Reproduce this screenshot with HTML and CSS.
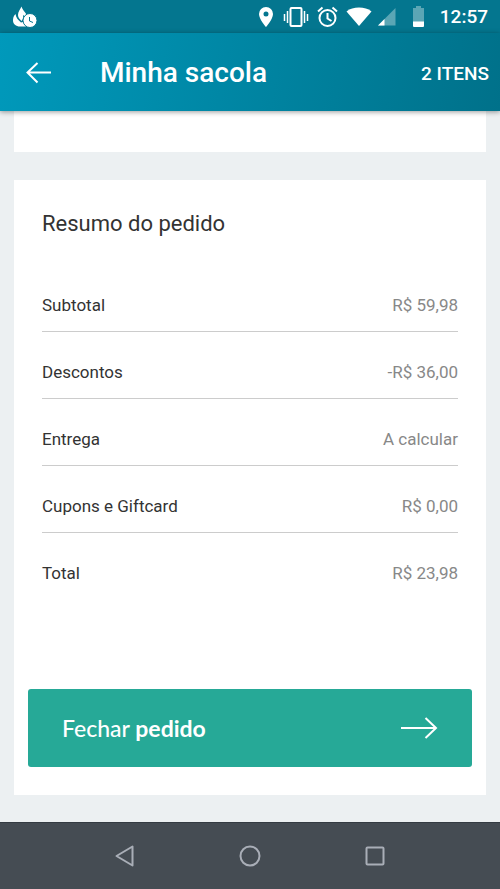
FILE: index.html
```html
<!DOCTYPE html>
<html lang="pt-BR">
<head>
<meta charset="utf-8">
<meta name="viewport" content="width=device-width, initial-scale=1">
<title>Minha sacola</title>
<link rel="stylesheet" href="styles.css">
</head>
<body>
<div class="status">
  <svg class="status-app" viewBox="0 0 30 33" aria-hidden="true">
    <path d="M9.500 6.500C8 9.500 6 12 6 15c0 2.500 1.500 4 3.500 6 1.500-1.500 2-3 1.500-6l3.500 2.500c1.500-4-4-6.500-5-11z" fill="#fff"/>
    <path d="M3.500 14C1.500 16 1 18 1 20.500 1 24 4 26.500 8 26.500h6V21l-5 1.500C6 20 4 17.500 3.500 14z" fill="#fff"/>
    <circle cx="18" cy="20.500" r="7" fill="#fff" stroke="#04768f" stroke-width="1"/>
    <path d="M17.500 17v4l3.500 1.500" fill="none" stroke="#04768f" stroke-width="1"/>
  </svg>
  <div class="status-icons">
    <svg viewBox="0 0 30 33" aria-hidden="true"><path fill="#fff" fill-rule="evenodd" d="M14 7a7 7 0 0 0-7 7c0 5.200 7 13 7 13s7-7.800 7-13a7 7 0 0 0-7-7zm0 4.500a2.500 2.500 0 1 1 0 5 2.500 2.500 0 0 1 0-5z"/></svg>
    <svg viewBox="0 0 30 33" aria-hidden="true"><path fill="none" stroke="#fff" stroke-width="2" d="M9.500 8h9a1 1 0 0 1 1 1v16a1 1 0 0 1-1 1h-9a1 1 0 0 1-1-1V9a1 1 0 0 1 1-1z"/><path fill="none" stroke="#fff" stroke-width="1.500" d="M2.500 14v7M5.500 11v12M22.500 11v12M25.500 14v7"/></svg>
    <svg viewBox="0 0 30 33" aria-hidden="true"><g fill="none" stroke="#fff" stroke-width="2"><circle cx="15.500" cy="18" r="8"/><path d="M15.500 13v5.500l4 2.500M6 11.500l4.500-4M25 11.500l-4.500-4"/></g></svg>
    <svg viewBox="0 0 30 33" aria-hidden="true"><path fill="#fff" d="M17 26L4.500 11.500C8 8.500 12 7.500 17 7.500s9 1 12.500 4z"/></svg>
    <svg viewBox="0 0 30 33" aria-hidden="true"><path fill="#5ba6b5" d="M23.500 8v17.500H6z"/><path fill="#fff" d="M12.500 19v6.500H6z"/></svg>
    <svg viewBox="0 0 30 33" aria-hidden="true"><path fill="#5ba6b5" d="M14 6h5v2h3v14H11V8h3z"/><path fill="#fff" d="M11 21.500h11V26a1 1 0 0 1-1 1h-9a1 1 0 0 1-1-1z"/></svg>
  </div>
  <time class="clock">12:57</time>
</div>
<header class="topbar">
  <button class="back" type="button" aria-label="Voltar">
    <svg viewBox="0 0 26 22" aria-hidden="true"><path d="M25 10.500H1.500M11.500 1L1.500 10.500l10 10"/></svg>
  </button>
  <h1>Minha sacola</h1>
  <span class="count">2 ITENS</span>
</header>
<main class="content">
  <section class="card card-previous" aria-hidden="true"></section>
  <section class="card summary">
    <h2>Resumo do pedido</h2>
    <dl>
      <div class="row"><dt>Subtotal</dt><dd>R$ 59,98</dd></div>
      <div class="row"><dt>Descontos</dt><dd>-R$ 36,00</dd></div>
      <div class="row"><dt>Entrega</dt><dd>A calcular</dd></div>
      <div class="row"><dt>Cupons e Giftcard</dt><dd>R$ 0,00</dd></div>
      <div class="row"><dt>Total</dt><dd>R$ 23,98</dd></div>
    </dl>
    <button class="checkout" type="button">
      <span>Fechar <b>pedido</b></span>
      <svg viewBox="0 0 38 22" aria-hidden="true"><path d="M1 11h34.500M25.500 1l10.500 10-10.500 10"/></svg>
    </button>
  </section>
</main>
<nav class="navbar" aria-label="Sistema">
  <button type="button" aria-label="Voltar"><svg viewBox="0 0 24 24" aria-hidden="true"><path d="M19.500 2.500v19L3.500 12z"/></svg></button>
  <button type="button" aria-label="Início"><svg viewBox="0 0 24 24" aria-hidden="true"><circle cx="12" cy="12" r="9.500"/></svg></button>
  <button type="button" aria-label="Recentes"><svg viewBox="0 0 24 24" aria-hidden="true"><rect x="3.500" y="3.500" width="17" height="17" rx="1"/></svg></button>
</nav>
</body>
</html>
```
FILE: styles.css
```css
* {
  box-sizing: border-box;
}

body {
  display: flex;
  flex-direction: column;
  min-height: 100vh;
  margin: 0;
  background: #ecf0f2;
  color: #333;
  font-family: Roboto, sans-serif;
}

button {
  border: 0;
  padding: 0;
  background: none;
  color: inherit;
  font: inherit;
  cursor: pointer;
}

svg {
  display: block;
}

.status {
  display: flex;
  align-items: center;
  padding: 0 12px;
  background: #04768f;
  color: #fff;
}

.status svg {
  width: 30px;
  height: 33px;
}

.status-icons {
  display: flex;
  margin-left: auto;
}

.clock {
  margin-left: 8px;
  font-size: 19px;
  font-weight: 500;
  line-height: 32px;
}

.topbar {
  position: relative;
  display: flex;
  align-items: center;
  padding: 20px 11px 18px 26px;
  background: linear-gradient(100deg, #0099bb, #00718a);
  box-shadow: 0 1px 5px rgba(0, 0, 0, 0.4);
  color: #fff;
}

.back svg {
  width: 26px;
  height: 22px;
  fill: none;
  stroke: #fff;
  stroke-width: 2;
}

h1 {
  flex: 1;
  margin: 0 0 0 48px;
  font-size: 28px;
  font-weight: 500;
  line-height: 40px;
}

.count {
  font-size: 19px;
  font-weight: 500;
}

.content {
  flex: 1;
  display: flex;
  flex-direction: column;
  gap: 28px;
  padding: 0 14px 27px;
}

.card {
  background: #fff;
}

.card-previous {
  padding-top: 41px;
}

.summary {
  padding: 28px 14px;
}

h2 {
  margin: 0 14px;
  font-size: 22px;
  font-weight: 400;
  line-height: 32px;
}

dl {
  margin: 25px 14px 90px;
}

.row {
  display: flex;
  justify-content: space-between;
  padding: 30px 0 15px;
  border-bottom: 1px solid #ccc;
  font-size: 17px;
  line-height: 21px;
}

.row:last-child {
  border-bottom: 0;
}

dd {
  margin: 0;
  color: #888;
}

.checkout {
  display: flex;
  align-items: center;
  justify-content: space-between;
  width: 100%;
  padding: 24px 34px;
  border-radius: 3px;
  background: #26a997;
  color: #fff;
  font-family: Lato, sans-serif;
  font-size: 23px;
  font-weight: 500;
  line-height: 30px;
}

.checkout svg {
  width: 38px;
  height: 22px;
  fill: none;
  stroke: #fff;
  stroke-width: 2;
}

.navbar {
  display: flex;
  justify-content: center;
  gap: 101px;
  padding: 21px 0;
  border-top: 1px solid #343b42;
  background: #454c53;
}

.navbar svg {
  width: 24px;
  height: 24px;
  fill: none;
  stroke: #a9aeb7;
  stroke-width: 2;
  stroke-linejoin: round;
}
```
